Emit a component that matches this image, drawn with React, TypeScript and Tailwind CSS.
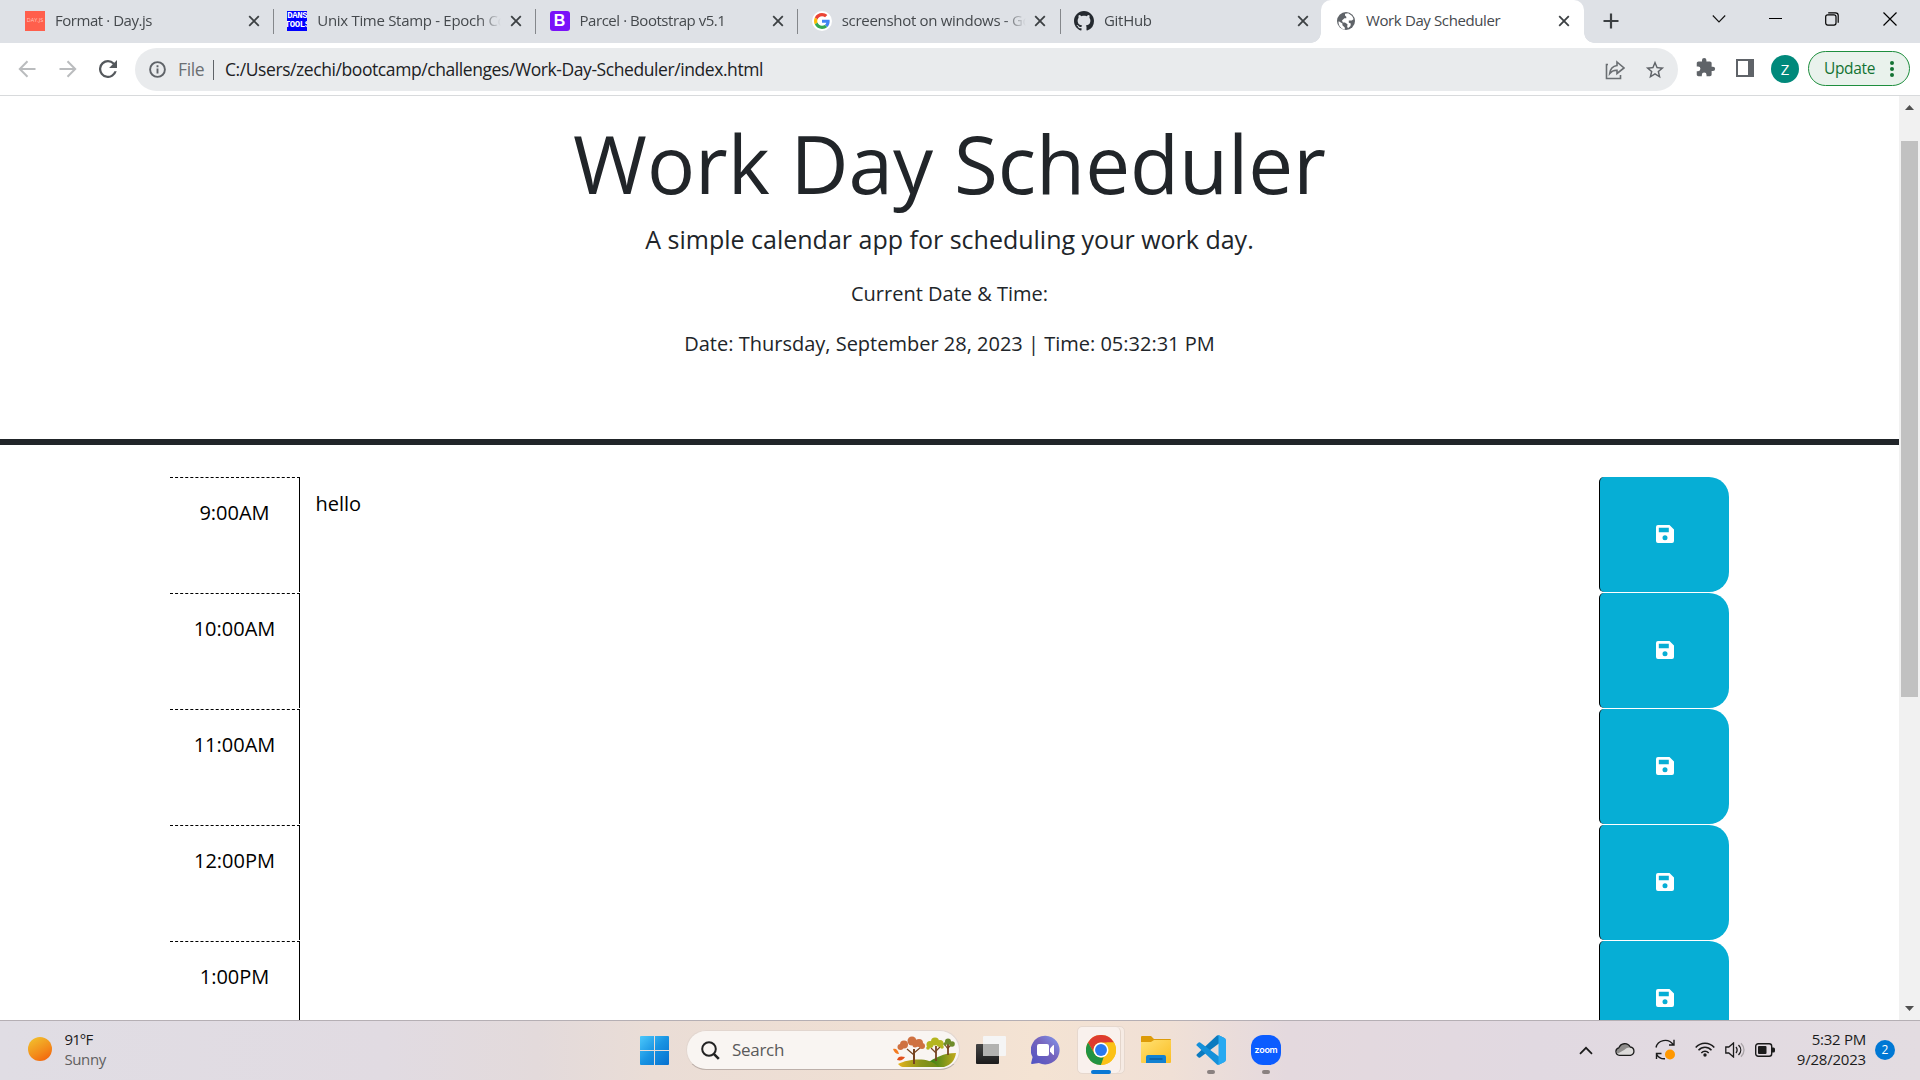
import React from "react";

const TABS = [
  { title: "Format · Day.js", icon: "dayjs", sep: true, track: "tracking-[-0.45px]" },
  { title: "Unix Time Stamp - Epoch Converter", icon: "dans", sep: true, track: "tracking-[-0.3px]" },
  { title: "Parcel · Bootstrap v5.1", icon: "bootstrap", sep: true, track: "tracking-[-0.45px]" },
  { title: "screenshot on windows - Google Search", icon: "google", sep: true, track: "tracking-[-0.3px]" },
  { title: "GitHub", icon: "github", sep: false, track: "tracking-[-0.3px]" },
];

const HOURS = [
  { label: "9:00AM", text: "hello" },
  { label: "10:00AM", text: "" },
  { label: "11:00AM", text: "" },
  { label: "12:00PM", text: "" },
  { label: "1:00PM", text: "" },
];

function Favicon({ name }: { name: string }) {
  if (name === "dayjs")
    return (
      <div className="flex size-5 items-center justify-center overflow-hidden bg-[#ff5f4c] text-[5.5px] leading-none text-[#ffc4bb]">
        DAY.JS
      </div>
    );
  if (name === "dans")
    return (
      <div className="flex size-5 flex-col items-center justify-between overflow-hidden bg-[#0000ff] py-px font-['Liberation_Mono'] text-[9px] leading-[9px] font-bold tracking-[-0.4px] text-white">
        <span>DANS</span>
        <span>TOOLS</span>
      </div>
    );
  if (name === "bootstrap")
    return (
      <div className="flex size-5 items-center justify-center rounded-[3px] bg-[#7a12f9] font-['Liberation_Sans'] text-[16px] leading-none font-bold text-white">
        B
      </div>
    );
  if (name === "google")
    return (
      <div className="flex size-5 items-center justify-center rounded-full bg-white">
        <svg viewBox="0 0 48 48" className="size-4">
          <path fill="#EA4335" d="M24 9.5c3.54 0 6.71 1.22 9.21 3.6l6.85-6.85C35.9 2.38 30.47 0 24 0 14.62 0 6.51 5.38 2.56 13.22l7.98 6.19C12.43 13.72 17.74 9.5 24 9.5z" />
          <path fill="#4285F4" d="M46.98 24.55c0-1.57-.15-3.09-.38-4.55H24v9.02h12.94c-.58 2.96-2.26 5.48-4.78 7.18l7.73 6c4.51-4.18 7.09-10.36 7.09-17.65z" />
          <path fill="#FBBC05" d="M10.53 28.59c-.48-1.45-.76-2.99-.76-4.59s.27-3.14.76-4.59l-7.98-6.19C.92 16.46 0 20.12 0 24c0 3.88.92 7.54 2.56 10.78l7.97-6.19z" />
          <path fill="#34A853" d="M24 48c6.48 0 11.93-2.13 15.89-5.81l-7.73-6c-2.15 1.45-4.92 2.3-8.16 2.3-6.26 0-11.57-4.22-13.47-9.91l-7.98 6.19C6.51 42.62 14.62 48 24 48z" />
        </svg>
      </div>
    );
  if (name === "github")
    return (
      <svg viewBox="0 0 16 16" className="size-5 fill-[#24292f]">
        <path d="M8 0C3.58 0 0 3.58 0 8c0 3.54 2.29 6.53 5.47 7.59.4.07.55-.17.55-.38 0-.19-.01-.82-.01-1.49-2.01.37-2.53-.49-2.69-.94-.09-.23-.48-.94-.82-1.13-.28-.15-.68-.52-.01-.53.63-.01 1.08.58 1.23.82.72 1.21 1.87.87 2.33.66.07-.52.28-.87.51-1.07-1.78-.2-3.64-.89-3.64-3.95 0-.87.31-1.59.82-2.15-.08-.2-.36-1.02.08-2.12 0 0 .67-.21 2.2.82.64-.18 1.32-.27 2-.27s1.36.09 2 .27c1.53-1.04 2.2-.82 2.2-.82.44 1.1.16 1.92.08 2.12.51.56.82 1.27.82 2.15 0 3.07-1.87 3.75-3.65 3.95.29.25.54.73.54 1.48 0 1.07-.01 1.93-.01 2.2 0 .21.15.46.55.38A8.01 8.01 0 0 0 16 8c0-4.42-3.58-8-8-8z" />
      </svg>
    );
  return (
    <svg viewBox="0 0 20 20" className="size-5">
      <circle cx="10" cy="10" r="9" fill="#5f6368" />
      <path fill="#fff" d="M2.8 10.2l3.6 2.2v1.8l2.4 2.4v2c-3.400-.5-6.300-3.400-6.300-7.500zM9 2.700l3.200-.4 3.300 2.200c1 .9 1.800 2.300 2 3.700l-1.700 1.300-3 .1v2.200l2 .8-.3 2.500-2.500 2.200-.8-1.500.3-2.500-2.600-1.700H6.800l-.8-2 2.400-2.400 1.900.1V5.700L9 4.500z" />
    </svg>
  );
}

function Close() {
  return (
    <svg viewBox="0 0 12 12" className="size-3 shrink-0" stroke="#3c4043" strokeWidth="1.8">
      <path d="M1.200 1.200l9.600 9.600M10.800 1.200l-9.600 9.600" />
    </svg>
  );
}

function TabStrip() {
  return (
    <div className="flex h-[43px] bg-[#dee1e6] pl-[12px] text-[15px] text-[#45494d]">
      {TABS.map((t, i) => (
        <div key={t.title} className={(i === 4 ? "w-[260px]" : "w-[262.25px]") + " flex h-[42px] shrink-0 items-center pl-[13px]"}>
          <Favicon name={t.icon} />
          <div className={"ml-[10px] w-[184px] overflow-hidden pb-[2px] whitespace-nowrap [mask-image:linear-gradient(to_right,#000_88%,transparent_100%)] " + t.track}>
            {t.title}
          </div>
          <div className="ml-[8.500px] flex">
            <Close />
          </div>
          {t.sep && <div className="mr-[0.500px] ml-auto h-[25px] w-px bg-[#84878b]" />}
        </div>
      ))}
      <div className="relative flex h-[43px] w-[263px] shrink-0 items-center rounded-t-[10px] bg-white pb-px pl-[15px] before:absolute before:bottom-0 before:-left-[10px] before:size-[10px] before:bg-[radial-gradient(circle_at_0_0,transparent_9.500px,#fff_10px)] after:absolute after:-right-[10px] after:bottom-0 after:size-[10px] after:bg-[radial-gradient(circle_at_100%_0,transparent_9.500px,#fff_10px)]">
        <Favicon name="globe" />
        <div className="ml-[10px] w-[184px] pb-[2px] tracking-[-0.38px] whitespace-nowrap">Work Day Scheduler</div>
        <div className="ml-[8px] flex">
          <Close />
        </div>
      </div>
      <svg viewBox="0 0 16 16" className="mt-[13px] ml-[19px] size-4" stroke="#3c4043" strokeWidth="2.200">
        <path d="M8 .5v15M.5 8h15" />
      </svg>
      <svg viewBox="0 0 14 10" className="mt-[14px] ml-[93px] h-[10px] w-[14px]" fill="none" stroke="#111" strokeWidth="1.100">
        <path d="M.8 1.500L7 8l6.200-6.500" />
      </svg>
      <div className="mt-[18px] ml-[43px] h-px w-[13px] bg-black" />
      <svg viewBox="0 0 14 14" className="mt-[12px] ml-[43px] size-[14px]" fill="none" stroke="#000" strokeWidth="1.200">
        <rect x=".7" y="2.800" width="10.300" height="10.300" rx="2" />
        <path d="M3.200.8h7.300a2.700 2.700 0 0 1 2.700 2.700v7.300" />
      </svg>
      <svg viewBox="0 0 14 14" className="mt-[12px] ml-[44px] size-[14px]" stroke="#000" strokeWidth="1.200">
        <path d="M.5.5l13 13M13.500.5l-13 13" />
      </svg>
    </div>
  );
}

function Toolbar() {
  return (
    <div className="flex h-[53px] items-start border-b border-[#d8dadc] bg-white">
      <svg viewBox="0 0 18 18" className="mt-[17px] ml-[18px] size-[18px]" fill="none" stroke="#babcbe" strokeWidth="2">
        <path d="M17.500 9H2M9.500 1.200L1.800 9l7.700 7.800" />
      </svg>
      <svg viewBox="0 0 18 18" className="mt-[17px] ml-[23px] size-[18px]" fill="none" stroke="#babcbe" strokeWidth="2">
        <path d="M.5 9H16M8.500 1.200L16.200 9l-7.700 7.800" />
      </svg>
      <svg viewBox="4 4 16 16" className="mt-[17px] ml-[22px] size-[18px]" fill="#54585c">
        <path d="M17.650 6.350A7.960 7.960 0 0 0 12 4a8 8 0 1 0 7.730 10h-2.080A6 6 0 1 1 12 6c1.660 0 3.140.69 4.220 1.780L13 11h7V4l-2.350 2.350z" />
      </svg>
      <div className="mt-[5px] ml-[18px] flex h-[43px] w-[1543px] items-center rounded-full bg-[#e9ebed] pl-[14px] text-[17.500px]">
        <svg viewBox="0 0 17 17" className="size-[17px]" fill="none" stroke="#5f6368" strokeWidth="1.900">
          <circle cx="8.500" cy="8.500" r="7.400" />
          <path d="M8.500 7.500v5M8.500 4.300v2" />
        </svg>
        <span className="ml-[12px] w-[35px] tracking-[-0.4px] text-[#6b6f73]">File</span>
        <div className="h-[20px] w-px bg-[#5f6368]" />
        <span className="ml-[11px] tracking-[-0.420px] text-[#202124]">C:/Users/zechi/bootcamp/challenges/Work-Day-Scheduler/index.html</span>
        <svg viewBox="0 0 20 20" className="mr-[19px] ml-auto size-5" fill="none" stroke="#6a6e72" strokeWidth="1.600">
          <path d="M3 4.500H1.500v14h14V15" />
          <path d="M12 2l7 6-7 5.500V10.300c-3.500-.2-5.500.8-7.300 3.200C5.200 9 7.500 6.200 12 5.500z" />
        </svg>
        <svg viewBox="0 0 24 24" className="mr-[12px] size-[22px]" fill="#5f6368">
          <path d="M22 9.240l-7.190-.62L12 2 9.190 8.630 2 9.240l5.460 4.730L5.820 21 12 17.270 18.180 21l-1.630-7.030L22 9.240zM12 15.400l-3.760 2.270 1-4.280-3.320-2.880 4.380-.38L12 6.100l1.710 4.040 4.380.38-3.320 2.880 1 4.280L12 15.400z" />
        </svg>
      </div>
      <svg viewBox="0 0 24 24" className="mt-[14px] ml-[17px] size-[21px]" fill="#5f6368">
        <path d="M20.500 11H19V7c0-1.100-.9-2-2-2h-4V3.500a2.500 2.500 0 0 0-5 0V5H4c-1.100 0-1.990.9-1.990 2v3.800H3.500a2.700 2.700 0 0 1 0 5.400H2V20c0 1.100.9 2 2 2h3.800v-1.500a2.700 2.700 0 0 1 5.400 0V22H17c1.100 0 2-.9 2-2v-4h1.500a2.500 2.500 0 0 0 0-5z" />
      </svg>
      <div className="mt-[16px] ml-[20px] h-[18px] w-[18px] border-2 border-r-[6px] border-[#5f6368] bg-white" />
      <div className="mt-[12px] ml-[17px] flex size-7 items-center justify-center rounded-full bg-[#00897b] text-[15px] text-white">Z</div>
      <div className="mt-[8px] ml-[9px] flex h-[35px] w-[102px] items-center rounded-full border-[1.500px] border-[#1e8e3e] bg-[#e9f2ec] pl-[15px] text-[15.500px] text-[#137333]">
        <span className="tracking-[-0.35px]">Update</span>
        <div className="mr-[15px] ml-auto flex flex-col gap-[2px]">
          <i className="size-1 rounded-full bg-[#137333]" />
          <i className="size-1 rounded-full bg-[#137333]" />
          <i className="size-1 rounded-full bg-[#137333]" />
        </div>
      </div>
    </div>
  );
}

function Page() {
  return (
    <div className="flex h-[924px] overflow-hidden bg-white">
      <div className="w-[1899px] shrink-0">
        <header className="h-[349px] border-b-[6px] border-[#212529] pt-[19px] text-center text-[20px] leading-[30px] text-[#212529]">
          <h1 className="text-[80px] leading-[96px]">Work Day Scheduler</h1>
          <p className="mt-[9px] text-[25px] leading-[38px]">A simple calendar app for scheduling your work day.</p>
          <p className="mt-[21px]">Current Date &amp; Time:</p>
          <p className="mt-[20px]">Date: Thursday, September 28, 2023 | Time: 05:32:31 PM</p>
        </header>
        <main className="mt-[32px] ml-[170px] flex w-[1559px] flex-col gap-px text-[20px] leading-[30px] text-black">
          {HOURS.map((h) => (
            <div key={h.label} className="flex h-[115px] shrink-0">
              <div className="w-[130px] border-t border-r border-black pt-[20px] text-center [border-top-style:dashed]">{h.label}</div>
              <div className="flex-1 pt-[12px] pl-[15.500px]">{h.text}</div>
              <button className="flex w-[130px] items-center justify-center rounded-l-[5px] rounded-r-[20px] border-l border-black bg-[#06aed5] pb-[2px]">
                <svg viewBox="0 0 18 18" className="size-[18px]">
                  <path fill="#fff" fillRule="evenodd" d="M2 0h11.500L18 4.500V16a2 2 0 0 1-2 2H2a2 2 0 0 1-2-2V2a2 2 0 0 1 2-2zM2.800 2.700v4.600h10V2.700zM9 10.300a2.500 2.500 0 1 0 0 5 2.500 2.500 0 0 0 0-5z" />
                </svg>
              </button>
            </div>
          ))}
        </main>
      </div>
      <div className="flex w-[21px] flex-col items-center bg-[#f1f1f1]">
        <svg viewBox="0 0 9 5" className="mt-[9px] h-[5px] w-[9px]" fill="#505050">
          <path d="M0 5L4.500 0 9 5z" />
        </svg>
        <div className="mt-[31px] h-[556px] w-[17px] bg-[#c1c1c1]" />
        <svg viewBox="0 0 9 5" className="mt-auto mb-[9px] h-[5px] w-[9px]" fill="#505050">
          <path d="M0 0l4.500 5L9 0z" />
        </svg>
      </div>
    </div>
  );
}

function Trees() {
  return (
    <svg viewBox="0 0 64 31" className="h-[31px] w-[64px]">
      <defs>
        <linearGradient id="hill" x1="0" x2="1">
          <stop offset="0" stopColor="#e6b41c" />
          <stop offset=".55" stopColor="#8d961a" />
          <stop offset="1" stopColor="#6f8a18" />
        </linearGradient>
        <linearGradient id="hill2" x1="0" x2="1">
          <stop offset="0" stopColor="#257c17" />
          <stop offset="1" stopColor="#c3aa1c" />
        </linearGradient>
      </defs>
      <path d="M34 27c8-5 16-10 29-10-1 7-5 12-12 14H34z" fill="url(#hill2)" />
      <path d="M5 28c8-4 22-6 31-3 4 1 7 3 9 6H10c-2 0-3-1-5-3z" fill="url(#hill)" />
      <g stroke="#76431f" fill="none">
        <path strokeWidth="2" d="M21 28V13" />
        <path strokeWidth="1.200" d="M21 19l-7-6M21 17l7-6M43 17l-5-5M43 15l5-5M55 13l-3-4M55 12l4-4" />
        <path strokeWidth="1.800" d="M43 25V10M55 19V8" />
      </g>
      <g fill="#cf7140">
        <circle cx="19" cy="5" r="4.500" />
        <circle cx="11" cy="8.500" r="4" />
        <circle cx="7.500" cy="11" r="3" />
        <circle cx="26" cy="7" r="4" />
        <circle cx="29" cy="10" r="3" />
        <circle cx="22" cy="9" r="2.500" />
      </g>
      <g fill="#b4b51e">
        <circle cx="42" cy="5.500" r="4" />
        <circle cx="37" cy="8.500" r="3.500" />
        <circle cx="47" cy="7.500" r="3.500" />
        <circle cx="35" cy="12" r="1.800" />
        <circle cx="49" cy="11" r="1.800" />
      </g>
      <g fill="#6e8c2a">
        <circle cx="55" cy="5.500" r="3" />
        <circle cx="59" cy="8" r="2.800" />
        <circle cx="52" cy="8" r="1.800" />
      </g>
      <path fill="#f47b20" d="M0 13c3-1 5 1 6 5-3 0-5-2-6-5z" />
      <path fill="#e2501c" d="M4 24c1-4 4-4 8-3-2 3-4 4-8 3z" />
    </svg>
  );
}

function Taskbar() {
  return (
    <div className="flex h-[60px] items-start border-t border-[#b5afb4] bg-[linear-gradient(90deg,#e0dde4_0%,#e1dbe2_20%,#e3dadb_28%,#eaddd6_34%,#efdfd3_45%,#f4e3d3_54%,#f0e0d6_61%,#e4d9de_67%,#e1d9e1_80%,#e3dce1_100%)] text-[15px] text-[#1b1b1b]">
      <div className="mt-[16px] ml-[28px] size-6 rounded-full bg-[linear-gradient(150deg,#f1bd2c_10%,#f38a1a_60%,#f3660e_90%)]" />
      <div className="mt-[8px] ml-[12.500px] w-[575.500px] text-[15px] leading-[20px]">
        <div className="tracking-[-0.9px]">91°F</div>
        <div className="tracking-[-0.4px] text-[#606060]">Sunny</div>
      </div>
      <svg viewBox="0 0 29 29" className="mt-[15px] size-[29px]">
        <defs>
          <linearGradient id="win" x1="0" y1="0" x2="1" y2="1" gradientUnits="objectBoundingBox">
            <stop offset="0" stopColor="#4cc8fb" />
            <stop offset=".5" stopColor="#1893e2" />
            <stop offset="1" stopColor="#0670cf" />
          </linearGradient>
        </defs>
        <path fill="url(#win)" d="M1 0h13v14H0V1a1 1 0 0 1 1-1zM15 0h13a1 1 0 0 1 1 1v13H15zM0 15h14v14H1a1 1 0 0 1-1-1zM15 15h14v13a1 1 0 0 1-1 1H15z" />
      </svg>
      <div className="mt-[9px] ml-[17px] flex h-[40px] w-[274px] items-center rounded-full border border-[#e2d6cf] border-b-[#bdb0aa] bg-[#f9f5f2] pl-[14px]">
        <svg viewBox="0 0 19 19" className="size-[19px]" fill="none" stroke="#222" strokeWidth="2">
          <circle cx="8" cy="8" r="6.800" />
          <path d="M12.800 12.800l5 5" strokeWidth="2.600" />
        </svg>
        <span className="ml-[12px] text-[17px] tracking-[-0.3px] text-[#5a5a5a]">Search</span>
        <div className="mt-[2px] mr-[2px] ml-auto">
          <Trees />
        </div>
      </div>
      <svg viewBox="0 0 30 28" className="mt-[15px] ml-[16px] h-[28px] w-[30px]">
        <defs>
          <linearGradient id="tv" y1="0" y2="1" x2="0">
            <stop offset="0" stopColor="#444" />
            <stop offset="1" stopColor="#1c1c1c" />
          </linearGradient>
        </defs>
        <rect y="8" width="23" height="20" rx="1" fill="url(#tv)" />
        <rect x="7" y="0" width="23" height="20" rx="1" fill="#f5f5f5" />
        <rect x="7" y="8" width="16" height="12" fill="#b2b2b0" />
      </svg>
      <svg viewBox="0 0 30 30" className="mt-[14px] ml-[25px] size-[30px]">
        <defs>
          <linearGradient id="chat" x1="1" x2="0" y1="0" y2="1">
            <stop offset="0" stopColor="#829bf0" />
            <stop offset=".45" stopColor="#7664bd" />
            <stop offset="1" stopColor="#4f53c4" />
          </linearGradient>
        </defs>
        <path fill="url(#chat)" d="M14.500.8a14.300 14.300 0 1 1-6.600 27.100L1.200 29a.9.900 0 0 1-1-1.200L1.600 22A14.300 14.300 0 0 1 14.500.8z" />
        <rect x="6" y="9" width="12" height="12" rx="2" fill="#fff" />
        <path fill="#fff" d="M19 13.500l3-3.200c.5-.4 1-.1 1 .4v8.600c0 .5-.5.8-1 .4l-3-3.200z" />
      </svg>
      <div className="mt-[5px] ml-[16px] flex h-[48px] w-[48px] rounded-[5px] border border-[#e6d8ce] bg-[#f6ebe4]">
        <div className="flex h-[46px] w-[43px] flex-col items-center rounded-[5px] border-r border-[#e3d5cb] bg-[#f9f1ed]">
          <svg viewBox="0 0 48 48" className="mt-[8px] ml-[4px] size-[30px] shrink-0">
            <circle cx="24" cy="24" r="24" fill="#fbc116" />
            <path fill="#de3b2f" d="M3.200 12A24 24 0 0 1 44.800 12H24a12 12 0 0 0-10.400 18z" />
            <path fill="#229342" d="M3.200 12l10.400 18a12 12 0 0 0 14.700 5.200L24 48A24 24 0 0 1 3.200 12z" />
            <path fill="#fbc116" d="M24 48l10.400-18A12 12 0 0 0 34.400 18L33 12h11.800A24 24 0 0 1 24 48z" />
            <circle cx="24" cy="24" r="12" fill="#fff" />
            <circle cx="24" cy="24" r="9.500" fill="#2a79ee" />
          </svg>
          <div className="mt-[5px] ml-[4px] h-[4px] w-[20px] shrink-0 rounded-full bg-[#0a78d4]" />
        </div>
      </div>
      <svg viewBox="0 0 30 27" className="mt-[15px] ml-[16px] h-[27px] w-[30px]">
        <defs>
          <linearGradient id="folder" x2="1" y2="1">
            <stop offset="0" stopColor="#ffe173" />
            <stop offset="1" stopColor="#fbbd22" />
          </linearGradient>
        </defs>
        <path fill="#dd9b08" d="M1 0h9l3 3h16a1 1 0 0 1 1 1v9H0V1a1 1 0 0 1 1-1z" />
        <path fill="url(#folder)" d="M0 6h10l3-2h17v22a1 1 0 0 1-1 1H1a1 1 0 0 1-1-1z" />
        <path fill="#1281d1" d="M7 19h16a2 2 0 0 1 2 2v6H5v-6a2 2 0 0 1 2-2z" />
        <path stroke="#0b5593" strokeWidth="1.200" d="M8.500 23h13" />
      </svg>
      <div className="mt-[14px] ml-[25px] flex w-[30px] flex-col items-center">
        <svg viewBox="0 0 100 100" className="size-[30px]">
          <path fill="#0b7abf" d="M96 11L75.900 1.200a6.200 6.200 0 0 0-7.100 1.200L3 64a4.200 4.200 0 0 0 0 6l5.600 5a4.200 4.200 0 0 0 5.300.2L94 15z" />
          <path fill="#1490da" d="M96 89L75.900 98.800a6.200 6.200 0 0 1-7.100-1.200L3 36a4.200 4.200 0 0 1 0-6l5.600-5a4.200 4.200 0 0 1 5.300-.2L94 85z" />
          <path fill="#27a9f1" d="M75.900 98.800a6.200 6.200 0 0 1-7.100-1.200c2.300 2.300 6.200.7 6.200-2.600V5c0-3.300-3.900-4.900-6.200-2.600a6.200 6.200 0 0 1 7.100-1.200l20.600 9.900A6.200 6.200 0 0 1 100 16.700v66.600a6.200 6.200 0 0 1-3.500 5.600z" />
        </svg>
        <div className="mt-[5px] h-[4px] w-[8px] rounded-full bg-[#8a8180]" />
      </div>
      <div className="mt-[14px] ml-[25px] flex w-[30px] flex-col items-center">
        <div className="flex size-[30px] items-center justify-center rounded-[12px] bg-[#0b5cff] pb-[2px] font-['Inter'] text-[9px] leading-none font-semibold tracking-[-0.3px] text-white">
          zoom
        </div>
        <div className="mt-[5px] h-[4px] w-[8px] rounded-full bg-[#8a8180]" />
      </div>
      <svg viewBox="0 0 14 9" className="mt-[25px] ml-[298px] h-[9px] w-[14px]" fill="none" stroke="#1b1b1b" strokeWidth="1.700">
        <path d="M1 7.800L7 1.800l6 6" />
      </svg>
      <svg viewBox="0 0 20 14" className="mt-[21px] ml-[22px] h-[14px] w-[20px]">
        <path fill="#dcdad9" d="M4.500 13.300a3.800 3.800 0 0 1-.6-7.500A6.200 6.200 0 0 1 15.200 5a4.200 4.200 0 0 1 .3 8.300z" />
        <path fill="#8e8c8b" d="M1.500 9c0-1.500 1-2.600 2.800-2.700C5.500.4 13-.5 14.700 5.500c-2.700 0-4.200 1.300-5.200 2.300L3 11.500C2 11 1.500 10 1.500 9z" />
        <path fill="none" stroke="#1b1b1b" strokeWidth="1.300" d="M4.500 13.300a3.800 3.800 0 0 1-.6-7.500A6.200 6.200 0 0 1 15.200 5a4.200 4.200 0 0 1 .3 8.300z" />
      </svg>
      <svg viewBox="0 0 20 21" className="mt-[18px] ml-[20px] h-[21px] w-[20px]" fill="none" stroke="#1b1b1b" strokeWidth="1.400">
        <path d="M1 8.500C2.500 1.500 13-2 18.500 6M19 .8V6h-5M6.500 14.500H1.500V20M1.500 15c2 4 5 5 8.500 4.800" />
        <circle cx="15" cy="15.500" r="5" fill="#ff9800" stroke="none" />
      </svg>
      <svg viewBox="0 0 20 15" className="mt-[21px] ml-[20px] h-[15px] w-[20px]" fill="none" stroke="#1b1b1b" strokeWidth="1.500">
        <path d="M.7 5.600c5-5.800 13.600-5.800 18.600 0M3.500 8.300c3.700-4 9.300-4 13 0M6.300 11c2.200-2.300 5.200-2.300 7.400 0" />
        <circle cx="10" cy="13" r="1.700" fill="#1b1b1b" stroke="none" />
      </svg>
      <svg viewBox="0 0 20 16" className="mt-[21px] ml-[10px] h-[16px] w-[20px]" fill="none" stroke="#1b1b1b" strokeWidth="1.300">
        <path d="M.8 5h3L8.500 1v14L3.800 11h-3zM11 5c1.500 2 1.500 4 0 6M13.500 3c3 3 3 7 0 10" />
        <path stroke="#aaa5a8" d="M16 1.200c4 4 4 9.600 0 13.600" />
      </svg>
      <svg viewBox="0 0 20 14" className="mt-[22px] ml-[10px] h-[14px] w-[20px]">
        <rect x=".7" y=".7" width="16" height="12.600" rx="2.500" fill="none" stroke="#1b1b1b" strokeWidth="1.400" />
        <rect x="3" y="3" width="8.500" height="8" rx="1" fill="#1b1b1b" />
        <path fill="#1b1b1b" d="M17 4.500h1.500a1.500 1.500 0 0 1 1.500 1.500v2a1.500 1.500 0 0 1-1.500 1.500H17z" />
      </svg>
      <div className="mt-[8px] ml-[16px] w-[75px] text-right text-[15px] leading-[20px] whitespace-nowrap">
        <div className="tracking-[-0.25px]">5:32 PM</div>
        <div className="tracking-[-0.2px]">9/28/2023</div>
      </div>
      <div className="mt-[19px] ml-[9px] flex size-5 items-center justify-center rounded-full bg-[#0078d4] text-[12px] leading-none text-white">2</div>
    </div>
  );
}

export default function App() {
  return (
    <div className="h-[1080px] w-[1920px] overflow-hidden bg-white font-['Open_Sans',sans-serif]">
      <TabStrip />
      <Toolbar />
      <Page />
      <Taskbar />
    </div>
  );
}
